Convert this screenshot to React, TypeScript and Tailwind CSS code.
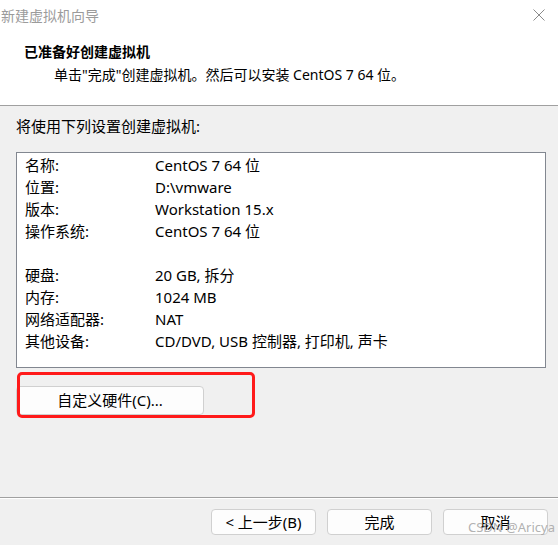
import React from "react";

const rows: [string, string][] = [
  ["名称:", "CentOS 7 64 位"],
  ["位置:", "D:\\vmware"],
  ["版本:", "Workstation 15.x"],
  ["操作系统:", "CentOS 7 64 位"],
  ["", ""],
  ["硬盘:", "20 GB, 拆分"],
  ["内存:", "1024 MB"],
  ["网络适配器:", "NAT"],
  ["其他设备:", "CD/DVD, USB 控制器, 打印机, 声卡"],
];

const WinButton = ({ label, className = "" }: { label: string; className?: string }) => (
  <button
    className={
      "flex items-center justify-center rounded-[4px] border border-[#d0d0d0] bg-[#fdfdfd] text-[15px] text-black " +
      className
    }
  >
    {label}
  </button>
);

const App: React.FC = () => {
  return (
    <div
      className="relative flex h-[545px] w-[558px] flex-col overflow-hidden bg-[#f0f0f0] text-black"
      style={{ fontFamily: '"Noto Sans", "Noto Sans CJK SC", sans-serif' }}
    >
      {/* header */}
      <div className="h-[106px] shrink-0 border-b border-[#a0a0a0] bg-white">
        <div className="flex h-[30px] items-center justify-between">
          <span className="pl-[1px] text-[14px] text-[#9b9b9b]">新建虚拟机向导</span>
          <svg className="mr-[13px] h-[12px] w-[12px]" viewBox="0 0 12 12" stroke="#8a8a8a" strokeWidth="1">
            <path d="M0.5 0.5L11.5 11.5M11.5 0.5L0.5 11.5" />
          </svg>
        </div>
        <div className="pl-[24px] pt-[11px] text-[14px] font-bold leading-[22px]">已准备好创建虚拟机</div>
        <div className="pl-[54px] pt-[1px] text-[14px] leading-[22px]">单击"完成"创建虚拟机。然后可以安装 CentOS 7 64 位。</div>
      </div>

      {/* body */}
      <div className="flex flex-1 flex-col px-4 pt-[9px]">
        <div className="text-[15px] leading-[22px]">将使用下列设置创建虚拟机:</div>
        <div className="mt-[15px] h-[216px] w-[530px] border border-[#828790] bg-white pl-[8px] pt-[1px]">
          {rows.map(([k, v], i) => (
            <div key={i} className="flex h-[22px] items-center text-[15px]">
              <span className="w-[130px]">{k}</span>
              <span>{v}</span>
            </div>
          ))}
        </div>
        <WinButton label="自定义硬件(C)..." className="mt-[18px] h-[29px] w-[188px]" />
      </div>

      {/* red annotation */}
      <div className="absolute left-[17px] top-[372px] h-[46px] w-[238px] rounded-[5px] border-[3px] border-[#ff1a1a]" />

      {/* footer */}
      <div className="flex h-[48px] shrink-0 justify-end gap-[11px] border-t border-[#a0a0a0] pr-[10px] pt-[11px] shadow-[inset_0_1px_0_#ffffff]">
        <WinButton label="< 上一步(B)" className="h-[26px] w-[105px]" />
        <WinButton label="完成" className="h-[26px] w-[105px]" />
        <WinButton label="取消" className="h-[26px] w-[105px]" />
      </div>

      <span className="absolute left-[468px] top-[517px] whitespace-nowrap text-[13px] leading-[20px] text-[#a8a8a8]/90">
        CSDN @Aricya
      </span>
    </div>
  );
};

export default App;
